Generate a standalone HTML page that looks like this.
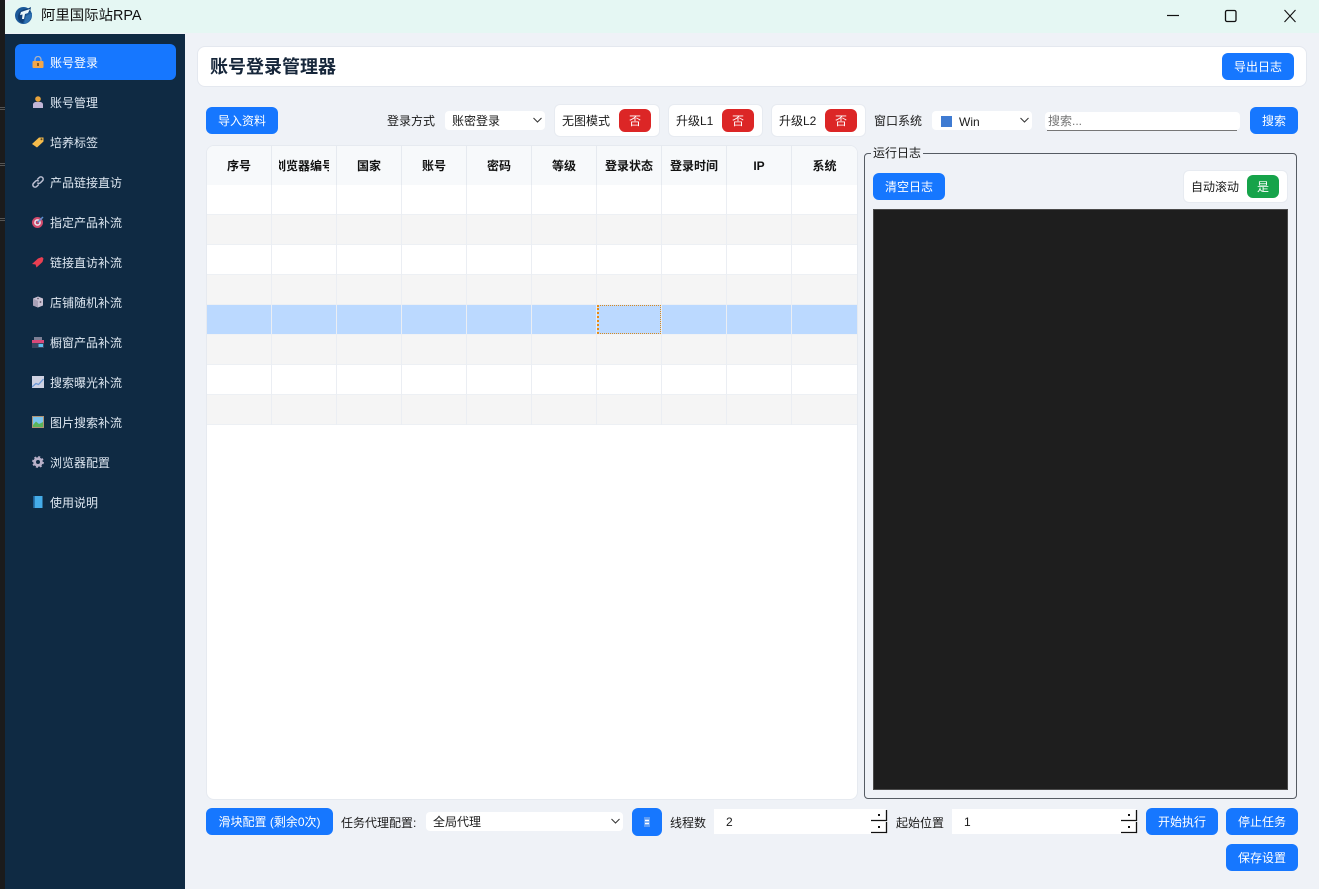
<!DOCTYPE html>
<html lang="zh"><head><meta charset="utf-8"><title>阿里国际站RPA</title>
<style>
*{box-sizing:border-box;margin:0;padding:0}
html,body{width:1319px;height:889px;overflow:hidden;background:#eff2f7;font-family:"Liberation Sans","Noto Sans CJK SC",sans-serif;font-size:12px;color:#1a1a1a}
.a{position:absolute}
.t{position:absolute;white-space:nowrap;line-height:16px}
.btn{position:absolute;background:#1677ff;color:#fff;border-radius:6px;text-align:center;font-size:12px;height:27px;line-height:29px;white-space:nowrap}
.nav{position:absolute;left:50px;color:#dfe8f2;font-size:12px;line-height:16px;white-space:nowrap}
.ic{position:absolute;left:32px;width:12px;height:12px}
.card{position:absolute;background:#fff;border:1px solid #e7ebf1;border-radius:6px}
.no{position:absolute;background:#dc2626;color:#fff;border-radius:6px;width:32px;height:23px;line-height:25px;text-align:center}
.sel{position:absolute;background:#fff;border-radius:4px;height:19px;line-height:20px;padding-left:7px}
.chev{position:absolute;right:2px;top:5px;width:11px;height:8px}
.th{position:absolute;top:0;width:65px;height:39px;border-right:1px solid #e6eaf0;text-align:center;font-weight:700;line-height:41px;overflow:hidden;white-space:nowrap;color:#111}
.row{position:absolute;left:0;width:650px;height:30px;border-bottom:1px solid #edf0f4}
.vl{position:absolute;width:1px;height:240px;top:39px;background:#ebeef3}
</style></head><body>
<div class="a" style="left:0;top:0;width:5px;height:889px;background:#1b1b1c"></div>
<div class="a" style="left:0;top:107px;width:5px;height:3px;border-top:1px solid #555;border-bottom:1px solid #555"></div>
<div class="a" style="left:0;top:163px;width:5px;height:3px;border-top:1px solid #555;border-bottom:1px solid #555"></div>
<div class="a" style="left:0;top:218px;width:5px;height:3px;border-top:1px solid #555;border-bottom:1px solid #555"></div>
<div class="a" style="left:5px;top:0;width:1314px;height:33px;background:#e5f7f3;border-top-left-radius:7px"></div>
<svg class="a" style="left:14px;top:5px" width="20" height="20" viewBox="0 0 20 20"><circle cx="9.500" cy="10.500" r="8.500" fill="#1c5a9a"/><path d="M4 12C4 7 8 4 13 4L17 2 16 7 12 8 11 12 9 18C6 18 4 15 4 12Z" fill="#0f3f78"/><path d="M7 7L16 4 14 8 11 9 10 14 8 14 8.500 9.500 6 10Z" fill="#e8f6fb"/><path d="M12 11L18 8C18 13 15 18 10 19Z" fill="#2d6fb0"/></svg>
<div class="t" style="left:41px;top:7px;font-size:14.400px;line-height:18px;color:#111">阿里国际站RPA</div>
<svg class="a" style="left:1160px;top:5px" width="150" height="20" viewBox="0 0 150 20" fill="none" stroke="#111"><path d="M7 10.500H19" stroke-width="1.200"/><rect x="65.500" y="5.500" width="10.500" height="11" rx="1.500" stroke-width="1.300"/><path d="M124.500 5L135.500 17M135.500 5L124.500 17" stroke-width="1.100"/></svg>

<div class="a" style="left:5px;top:34px;width:180px;height:855px;background:#0f2a43"></div>
<div class="a" style="left:15px;top:44px;width:161px;height:36px;background:#1677ff;border-radius:6px"></div>
<svg class="ic" style="top:56px" viewBox="0 0 12 12"><path d="M3 5V3.500a3 3 0 0 1 6 0V5" fill="none" stroke="#a9b2c2" stroke-width="1.300"/><rect x="0.500" y="5" width="11" height="7" rx="1" fill="#f2a74b"/><rect x="5" y="7" width="2" height="3" fill="#8a5a20"/></svg>
<div class="nav" style="top:55px;color:#fff">账号登录</div>
<svg class="ic" style="top:96px" viewBox="0 0 12 12"><circle cx="6" cy="3" r="2.800" fill="#e8a33c"/><path d="M1 12V8.500C1 7 2.500 6 4 6H8C9.500 6 11 7 11 8.500V12Z" fill="#c1b5d6"/></svg>
<div class="nav" style="top:95px">账号管理</div>
<svg class="ic" style="top:136px" viewBox="0 0 12 12"><path d="M0 8L7 1.500L11.500 1.500V5.500L5 11.500Z" fill="#f5bb4b"/><circle cx="9.500" cy="3.300" r="1" fill="#5a4a2a"/></svg>
<div class="nav" style="top:135px">培养标签</div>
<svg class="ic" style="top:176px" viewBox="0 0 12 12" fill="none" stroke="#bcbfd2" stroke-width="1.500"><path d="M5.300 3.500L7.300 1.500A2.100 2.100 0 0 1 10.500 4.700L8.500 6.700A2.100 2.100 0 0 1 5.300 6.700"/><path d="M6.700 8.500L4.700 10.500A2.100 2.100 0 0 1 1.500 7.300L3.500 5.300A2.100 2.100 0 0 1 6.700 5.300"/></svg>
<div class="nav" style="top:175px">产品链接直访</div>
<svg class="ic" style="top:216px" viewBox="0 0 12 12"><circle cx="5.500" cy="6.500" r="5.500" fill="#d14a6c"/><circle cx="5.500" cy="6.500" r="3.400" fill="#e8dce6"/><circle cx="5.500" cy="6.500" r="1.700" fill="#c53a5e"/><path d="M5.500 6.500L11 1" stroke="#5b8fd0" stroke-width="1.500"/></svg>
<div class="nav" style="top:215px">指定产品补流</div>
<svg class="ic" style="top:256px" viewBox="0 0 12 12"><path d="M0 8L6 2.500L10 1L11.500 2.500L10.500 6L4.500 11.500L3.500 8.500Z" fill="#ea3f52"/></svg>
<div class="nav" style="top:255px">链接直访补流</div>
<svg class="ic" style="top:296px" viewBox="0 0 12 12"><path d="M1 2.500L6 .5L11 2.500V9.500L6 11.500L1 9.500Z" fill="#c8c0d2"/><path d="M1 2.500L6 5V11.500L1 9.500Z" fill="#a8a0b6"/><circle cx="8.500" cy="6" r=".9" fill="#5a4f62"/><circle cx="6" cy="2.500" r=".8" fill="#5a4f62"/></svg>
<div class="nav" style="top:295px">店铺随机补流</div>
<svg class="ic" style="top:336px" viewBox="0 0 12 12"><rect y="5" width="12" height="7" fill="#3a4660"/><rect x="2" y="1" width="8" height="3.500" fill="#7d7f95"/><rect y="4" width="12" height="3" fill="#d9497a"/><rect x="6.500" y="8" width="4.500" height="3" fill="#5fc0ee"/></svg>
<div class="nav" style="top:335px">橱窗产品补流</div>
<svg class="ic" style="top:376px" viewBox="0 0 12 12"><rect width="12" height="12" fill="#cfd2e2"/><path d="M0 11L4 7.500 6.500 8.500 11.500 3" fill="none" stroke="#6d9ad8" stroke-width="1.300"/></svg>
<div class="nav" style="top:375px">搜索曝光补流</div>
<svg class="ic" style="top:416px" viewBox="0 0 12 12"><rect width="12" height="12" fill="#b09474"/><rect x="1" y="1" width="10" height="10" fill="#7cc4ee"/><path d="M1 9L4 5.500 7 8 11 6V11H1Z" fill="#5ab45a"/></svg>
<div class="nav" style="top:415px">图片搜索补流</div>
<svg class="ic" style="top:456px" viewBox="0 0 12 12"><circle cx="6" cy="6" r="3.400" fill="none" stroke="#b8b0c8" stroke-width="2.800"/><circle cx="6" cy="6" r="5" fill="none" stroke="#b8b0c8" stroke-width="1.800" stroke-dasharray="2 1.930"/></svg>
<div class="nav" style="top:455px">浏览器配置</div>
<svg class="ic" style="top:496px" viewBox="0 0 12 12"><rect x="1" width="9.500" height="12" fill="#45ace8"/><rect x="1" width="1.700" height="12" fill="#1e5f94"/></svg>
<div class="nav" style="top:495px">使用说明</div>

<div class="a" style="left:197px;top:46px;width:1110px;height:41px;background:#fff;border:1px solid #e4e8ef;border-radius:8px"></div>
<div class="t" style="left:210px;top:56px;font-size:18px;line-height:22px;font-weight:700;color:#16263a">账号登录管理器</div>
<div class="btn" style="left:1222px;top:53px;width:72px">导出日志</div>

<div class="btn" style="left:206px;top:107px;width:72px">导入资料</div>
<div class="t" style="left:387px;top:113px">登录方式</div>
<div class="sel" style="left:445px;top:111px;width:100px">账密登录<svg class="chev" viewBox="0 0 11 8"><path d="M1.500 2L5.500 6L9.500 2" fill="none" stroke="#333" stroke-width="1"/></svg></div>
<div class="card" style="left:554px;top:104px;width:106px;height:33px"></div>
<div class="t" style="left:562px;top:113px">无图模式</div><div class="no" style="left:619px;top:109px;width:32px">否</div>
<div class="card" style="left:668px;top:104px;width:95px;height:33px"></div>
<div class="t" style="left:676px;top:113px">升级L1</div><div class="no" style="left:722px;top:109px;width:32px">否</div>
<div class="card" style="left:771px;top:104px;width:95px;height:33px"></div>
<div class="t" style="left:779px;top:113px">升级L2</div><div class="no" style="left:825px;top:109px;width:32px">否</div>
<div class="t" style="left:874px;top:113px">窗口系统</div>
<div class="sel" style="left:932px;top:111px;width:100px;padding-left:27px;line-height:22px">Win<svg class="chev" viewBox="0 0 11 8"><path d="M1.500 2L5.500 6L9.500 2" fill="none" stroke="#333" stroke-width="1"/></svg><span class="a" style="left:9px;top:5px;width:11px;height:11px;background:#3f7bd2"></span></div>
<div class="a" style="left:1045px;top:112px;width:195px;height:18px;background:#fff;border-radius:4px"></div>
<div class="a" style="left:1047px;top:130px;width:190px;height:1px;background:#777"></div>
<div class="t" style="left:1048px;top:113px;color:#757575">搜索...</div>
<div class="btn" style="left:1250px;top:107px;width:48px">搜索</div>

<div class="a" style="left:206px;top:145px;width:652px;height:655px;background:#fff;border:1px solid #e6eaf0;border-radius:8px;overflow:hidden">
 <div class="a" style="left:0;top:0;width:650px;height:39px;background:#f7f9fb"></div>
 <div class="th" style="left:0">序号</div>
 <div class="th" style="left:65px"><span class="a" style="left:7px;top:0;width:50px;height:39px;overflow:hidden"><span class="a" style="left:-5px;top:0;width:60px">浏览器编号</span></span></div>
 <div class="th" style="left:130px">国家</div><div class="th" style="left:195px">账号</div><div class="th" style="left:260px">密码</div><div class="th" style="left:325px">等级</div><div class="th" style="left:390px">登录状态</div><div class="th" style="left:455px">登录时间</div><div class="th" style="left:520px">IP</div><div class="th" style="left:585px;border-right:0">系统</div>
 <div class="row" style="top:39px;background:#fff"></div>
 <div class="row" style="top:69px;background:#f5f5f5"></div>
 <div class="row" style="top:99px;background:#fff"></div>
 <div class="row" style="top:129px;background:#f5f5f5"></div>
 <div class="row" style="top:159px;background:#bbd9ff;border-bottom:1px solid #f0f2f5"></div>
 <div class="row" style="top:189px;background:#f5f5f5"></div>
 <div class="row" style="top:219px;background:#fff"></div>
 <div class="row" style="top:249px;background:#f5f5f5"></div>
 <div class="vl" style="left:64px"></div><div class="vl" style="left:129px"></div><div class="vl" style="left:194px"></div><div class="vl" style="left:259px"></div><div class="vl" style="left:324px"></div><div class="vl" style="left:389px"></div><div class="vl" style="left:454px"></div><div class="vl" style="left:519px"></div><div class="vl" style="left:584px"></div>
 <div class="a" style="left:390px;top:159px;width:64px;height:29px;border:1px dotted #d98a1e;border-left:2px dotted #e98a10"></div>
</div>

<div class="a" style="left:864px;top:153px;width:433px;height:646px;border:1px solid #555b63;border-radius:4px"></div>
<div class="t" style="left:871px;top:145px;background:#eff2f7;padding:0 2px">运行日志</div>
<div class="btn" style="left:873px;top:173px;width:72px">清空日志</div>
<div class="card" style="left:1183px;top:170px;width:105px;height:33px"></div>
<div class="t" style="left:1191px;top:179px">自动滚动</div>
<div class="a" style="left:1247px;top:175px;width:32px;height:23px;background:#16a34a;border-radius:6px;color:#fff;text-align:center;line-height:25px">是</div>
<div class="a" style="left:873px;top:209px;width:415px;height:581px;background:#1e1e1e;border:1px solid #4a4a4a"></div>

<div class="btn" style="left:206px;top:808px;width:127px">滑块配置 (剩余0次)</div>
<div class="t" style="left:341px;top:815px">任务代理配置:</div>
<div class="sel" style="left:426px;top:812px;width:197px;line-height:21px">全局代理<svg class="chev" viewBox="0 0 11 8"><path d="M1.500 2L5.500 6L9.500 2" fill="none" stroke="#333" stroke-width="1"/></svg></div>
<div class="a" style="left:632px;top:808px;width:30px;height:28px;background:#1677ff;border-radius:6px"></div>
<svg class="a" style="left:644px;top:817px" width="6" height="10" viewBox="0 0 6 10"><rect width="6" height="10" fill="#5d9cf5"/><path d="M1 3.500H5M1 6.500H5" stroke="#fff" stroke-width="1.400"/></svg>
<div class="t" style="left:670px;top:815px">线程数</div>
<div class="a" style="left:714px;top:809px;width:172px;height:25px;background:#fff"></div>
<div class="t" style="left:726px;top:814px">2</div>
<svg class="a" style="left:871px;top:809px" width="17" height="25" viewBox="0 0 17 25"><rect x="0" y="0" width="15" height="25" fill="#fff"/><path d="M0 11.500H15.500V1M0 23.500H15.500V13" fill="none" stroke="#111" stroke-width="1.300"/><rect x="7" y="5" width="2" height="2" fill="#111"/><rect x="7" y="17" width="2" height="2" fill="#111"/></svg>
<div class="t" style="left:896px;top:815px">起始位置</div>
<div class="a" style="left:952px;top:809px;width:184px;height:25px;background:#fff"></div>
<div class="t" style="left:964px;top:814px">1</div>
<svg class="a" style="left:1121px;top:809px" width="17" height="25" viewBox="0 0 17 25"><rect x="0" y="0" width="15" height="25" fill="#fff"/><path d="M0 11.500H15.500V1M0 23.500H15.500V13" fill="none" stroke="#111" stroke-width="1.300"/><rect x="7" y="5" width="2" height="2" fill="#111"/><rect x="7" y="17" width="2" height="2" fill="#111"/></svg>
<div class="btn" style="left:1146px;top:808px;width:72px">开始执行</div>
<div class="btn" style="left:1226px;top:808px;width:72px">停止任务</div>
<div class="btn" style="left:1226px;top:844px;width:72px">保存设置</div>
</body></html>
